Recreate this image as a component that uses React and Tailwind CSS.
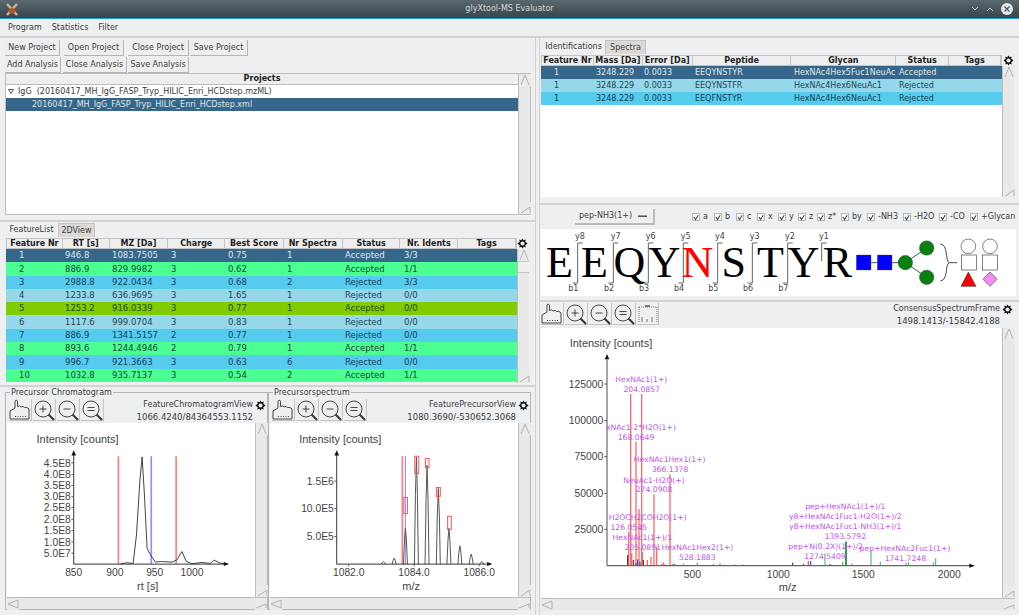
import React from 'react';

const features = [
  ['1', '946.8', '1083.7505', '3', '0.75', '1', 'Accepted', '3/3', '', 'sel'],
  ['2', '886.9', '829.9982', '3', '0.62', '1', 'Accepted', '1/1', '', 'green'],
  ['3', '2988.8', '922.0434', '3', '0.68', '2', 'Rejected', '3/3', '', 'blue'],
  ['4', '1233.8', '636.9695', '3', '1.65', '1', 'Rejected', '0/0', '', 'light'],
  ['5', '1253.2', '916.0339', '3', '0.77', '1', 'Accepted', '0/0', '', 'olive'],
  ['6', '1117.6', '999.0704', '3', '0.83', '1', 'Rejected', '0/0', '', 'light'],
  ['7', '886.9', '1341.5157', '2', '0.77', '1', 'Rejected', '0/0', '', 'blue'],
  ['8', '893.6', '1244.4946', '2', '0.79', '1', 'Accepted', '1/1', '', 'green'],
  ['9', '996.7', '921.3663', '3', '0.63', '6', 'Rejected', '0/0', '', 'blue'],
  ['10', '1032.8', '935.7137', '3', '0.54', '2', 'Accepted', '1/1', '', 'green'],
];
const featureCols = [
  ['Feature Nr', 'w-[56px]', 'w-[56px] pl-[13px]'],
  ['RT [s]', 'w-[47px]', 'w-[47px] pl-[3px]'],
  ['MZ [Da]', 'w-[59px]', 'w-[59px] pl-[3px]'],
  ['Charge', 'w-[57px]', 'w-[57px] pl-[3px]'],
  ['Best Score', 'w-[59px]', 'w-[59px] pl-[3px]'],
  ['Nr Spectra', 'w-[59px]', 'w-[59px] pl-[3px]'],
  ['Status', 'w-[58px]', 'w-[58px] pl-[2px]'],
  ['Nr. Idents', 'w-[58px]', 'w-[58px] pl-[3px]'],
  ['Tags', 'w-[58px]', 'w-[58px]'],
];
const idents = [
  ['1', '3248.229', '0.0033', 'EEQYNSTYR', 'HexNAc4Hex5Fuc1NeuAc', 'Accepted', '', 'sel'],
  ['1', '3248.229', '0.0033', 'EEQYNSTFR', 'HexNAc4Hex6NeuAc1', 'Rejected', '', 'light'],
  ['1', '3248.229', '0.0033', 'EEQFNSTYR', 'HexNAc4Hex6NeuAc1', 'Rejected', '', 'blue'],
];
const identCols = [
  ['Feature Nr', 'w-[52px]', 'w-[52px] pl-[13px]'],
  ['Mass [Da]', 'w-[49px]', 'w-[49px] pl-[3px]'],
  ['Error [Da]', 'w-[50px]', 'w-[50px] pl-[2px]'],
  ['Peptide', 'w-[99px]', 'w-[99px] pl-[3px]'],
  ['Glycan', 'w-[105px]', 'w-[105px] pl-[3px]'],
  ['Status', 'w-[53px]', 'w-[53px] pl-[3px]'],
  ['Tags', 'w-[52px]', 'w-[52px]'],
];
const rowColors = {
  sel: 'bg-[#36678a] text-[#dfe8ee]',
  green: 'bg-[#4bff90] text-[#17453f]',
  blue: 'bg-[#55cbee] text-[#173f55]',
  light: 'bg-[#96d7e9] text-[#234654]',
  olive: 'bg-[#80cc00] text-[#1f4a10]',
};
const checks = [
  ['a', 'w-[22px]'], ['b', 'w-[22px]'], ['c', 'w-[21px]'], ['x', 'w-[21px]'], ['y', 'w-[20px]'], ['z', 'w-[19px]'],
  ['z*', 'w-[24px]'], ['by', 'w-[26px]'], ['-NH3', 'w-[36px]'], ['-H2O', 'w-[36px]'], ['-CO', 'w-[31px]'], ['+Glycan', 'w-[44px]'],
];

function Gear() {
  return (
    <svg width="11" height="11" viewBox="0 0 24 24" className="shrink-0">
      <path d="M12 1l2.5 4 4.5-1.500L18 8l5 4-5 4 1 4.500-4.500-1.500L12 23l-2.500-4-4.500 1.500L6 16l-5-4 5-4-1-4.500L9.500 5z" fill="#111" />
      <circle cx="12" cy="12" r="4.500" fill="#eee" />
    </svg>
  );
}

function Btn({ children, className }) {
  return (
    <div className={`flex h-[16px] items-center justify-center border-r border-b border-[#b5b5b5] bg-[#eeeeee] ${className}`}>
      {children}
    </div>
  );
}

function Arrow({ dir }) {
  const p = dir === 'up' ? 'M2 11L6 1L10 11' : dir === 'down' ? 'M2 11L11 5V11' : dir === 'left' ? 'M11 2L1 6L11 10Z' : 'M1 10L11 6V10';
  return (
    <div className="flex h-[12px] w-[12px] shrink-0 items-center justify-center bg-[#eaeaea]">
      <svg width="12" height="12" viewBox="0 0 12 12"><path d={p} fill="none" stroke="#b4b4b4" /></svg>
    </div>
  );
}

function VScroll({ thumb, className }) {
  return (
    <div className={`flex w-[12px] shrink-0 flex-col border-l border-[#bdbdbd] bg-[#e8e8e8] ${className || ''}`}>
      <Arrow dir="up" />
      {thumb && <div className="h-[12px] border-y border-[#c5c5c5] bg-[#efefef]" />}
      <div className="flex-1" />
      <Arrow dir="down" />
    </div>
  );
}

function HScroll() {
  return (
    <div className="flex h-[12px] shrink-0 border-t border-[#bdbdbd] bg-[#e8e8e8]">
      <Arrow dir="left" />
      <div className="flex-1" />
      <Arrow dir="right" />
    </div>
  );
}

function Hand() {
  return (
    <svg width="22" height="22" viewBox="0 0 22 22" fill="none" stroke="#333" strokeWidth="0.9">
      <path d="M1 20V12L6 9V2.500a1.200 1.200 0 0 1 2.500 0V7.500q2.500-1.500 3.500 .5q2.500-1.500 3.500 .5q2.500-1 4.500 1.500V20Z" />
      <path d="M6 17.500H18" strokeDasharray="1 1.500" />
    </svg>
  );
}

function Lens({ sign }) {
  return (
    <svg width="22" height="22" viewBox="0 0 22 22" fill="none" stroke="#333">
      <circle cx="10" cy="10" r="8" strokeWidth="0.9" />
      <path d="M15.500 15.500L21 21" strokeWidth="2" />
      {sign === '+' && <path d="M6.500 10H13.500M10 6.500V13.500" strokeWidth="0.9" />}
      {sign === '-' && <path d="M6.500 10H13.500" strokeWidth="0.9" />}
      {sign === '=' && <path d="M6.500 8.500H13.500M6.500 11.500H13.500" strokeWidth="0.9" />}
    </svg>
  );
}

function Tools({ children }) {
  return (
    <div className="flex gap-[1px]">
      <div className="flex h-[22px] w-[23px] items-center justify-center border-r border-b border-[#c4c4c4]"><Hand /></div>
      <div className="flex h-[22px] w-[23px] items-center justify-center border-r border-b border-[#c4c4c4]"><Lens sign="+" /></div>
      <div className="flex h-[22px] w-[23px] items-center justify-center border-r border-b border-[#c4c4c4]"><Lens sign="-" /></div>
      <div className="flex h-[22px] w-[23px] items-center justify-center border-r border-b border-[#c4c4c4]"><Lens sign="=" /></div>
      {children}
    </div>
  );
}

function ViewInfo({ name, coords }) {
  return (
    <div className="flex flex-col items-end leading-[12px]">
      <div className="flex items-center gap-[2px]">{name}<Gear /></div>
      <div className="pr-[13px] text-[8.5px]">{coords}</div>
    </div>
  );
}

const axisText = "fill-[#444] font-['Liberation_Sans',sans-serif] text-[33px]";
const tickText = "fill-[#444] font-['Liberation_Sans',sans-serif] text-[31px]";

function YTick({ x, y, label }) {
  return (
    <g>
      <line x1={x - 7} x2={x} y1={y} y2={y} stroke="#555" strokeWidth="3" />
      <text x={x - 9} y={y + 11} textAnchor="end" className={tickText}>{label}</text>
    </g>
  );
}

function Axes({ x0, y0, top, right, strokeW, yColor }) {
  return (
    <g>
      <line x1={x0} x2={x0} y1={y0} y2={top + 10} stroke={yColor} strokeWidth={strokeW} />
      <line x1={x0} x2={right - 10} y1={y0} y2={y0} stroke={yColor} strokeWidth={strokeW} />
      <path d={`M${x0 - 7} ${top + 14}L${x0} ${top - 2}L${x0 + 7} ${top + 14}Z`} fill="#111" />
      <path d={`M${right - 14} ${y0 - 6}L${right + 2} ${y0}L${right - 14} ${y0 + 6}Z`} fill="#111" />
    </g>
  );
}

function ChromatogramPlot() {
  const ticks = [['4.5E8', 233], ['4.0E8', 268], ['3.5E8', 301], ['3.0E8', 335], ['2.5E8', 368], ['2.0E8', 403], ['1.5E8', 437], ['1.0E8', 471], ['5.0E7', 505]];
  return (
    <svg viewBox="18 114 747 522" className="h-[174px] w-[249px] bg-white">
      <text x="107" y="174" className={axisText}>Intensity [counts]</text>
      <rect x="351" y="213" width="5" height="325" fill="#ff7f7f" />
      <rect x="525" y="213" width="5" height="325" fill="#ff7f7f" />
      <rect x="450" y="213" width="5" height="325" fill="#8f8fff" />
      <polyline fill="none" stroke="#444" strokeWidth="3" points="360,537 380,534 398,536 408,450 418,290 425,215 432,330 440,490 450,510 465,532 480,530 515,532 530,525 545,500 558,530 575,537 605,533 630,536 642,526 660,535 680,537" />
      <Axes x0={219} y0={538} top={197} right={685} strokeW={3} yColor="#333" />
      {ticks.map(([l, y]) => <YTick key={l} x={219} y={y} label={l} />)}
      {[['850', 219], ['900', 343], ['950', 463], ['1000', 575]].map(([l, x]) => (
        <text key={l} x={x} y={574} textAnchor="middle" className={tickText}>{l}</text>
      ))}
      <text x="442" y="615" textAnchor="middle" className={axisText}>rt [s]</text>
    </svg>
  );
}

function PrecursorPlot() {
  const peaks = [[352, 530], [384, 520], [418, 430], [451, 215], [483, 240], [517, 310], [549, 430], [582, 483], [616, 508], [648, 530]];
  const boxes = [[413, 337, 11, 49], [446, 213, 12, 52], [478, 220, 11, 28], [511, 307, 12, 27], [545, 394, 11, 40]];
  return (
    <svg viewBox="10 114 747 522" className="h-[174px] w-[249px] bg-white">
      <text x="98" y="174" className={axisText}>Intensity [counts]</text>
      <rect x="406" y="213" width="5" height="325" fill="#ff7f7f" />
      <rect x="416" y="213" width="3" height="325" fill="#7f7fff" />
      {peaks.map(([x, t]) => (
        <polyline key={x} fill="none" stroke="#555" strokeWidth="3" points={`${x - 6},538 ${x - 3},${t + (538 - t) * 0.35} ${x},${t} ${x + 3},${t + (538 - t) * 0.35} ${x + 6},538`} />
      ))}
      {boxes.map(([x, y, w, h]) => (
        <rect key={x} x={x} y={y} width={w} height={h} fill="none" stroke="#ff5555" strokeWidth="3" />
      ))}
      <Axes x0={211} y0={538} top={197} right={678} strokeW={3} yColor="#333" />
      {[['1.5E6', 288], ['10.0E5', 371], ['5.0E5', 455]].map(([l, y]) => <YTick key={l} x={211} y={y} label={l} />)}
      {[['1082.0', 247], ['1084.0', 444], ['1086.0', 640]].map(([l, x]) => (
        <g key={l}>
          <line x1={x} x2={x} y1={538} y2={544} stroke="#555" strokeWidth="3" />
          <text x={x} y={574} textAnchor="middle" className={tickText}>{l}</text>
        </g>
      ))}
      <text x="435" y="615" textAnchor="middle" className={axisText}>m/z</text>
    </svg>
  );
}

const annText = "fill-[#bf55f2] font-['DejaVu_Sans',sans-serif] text-[23px]";

function ConsensusPlot() {
  const red = [[287, 192], [303, 335], [320, 192], [357, 493], [405, 433], [281, 605], [312, 537], [365, 650], [348, 680], [337, 690], [290, 670], [322, 665], [385, 697], [555, 700], [487, 698]];
  const green = [[870, 670], [932, 635], [1008, 660], [1036, 695], [923, 695], [1113, 698], [1120, 696], [1195, 697], [1202, 685]];
  const dark = [[278, 675], [295, 690], [303, 700], [315, 695], [325, 690], [773, 698], [805, 702], [885, 702], [950, 703], [380, 703], [420, 703], [445, 703], [535, 703]];
  const blue = [[308, 688], [827, 693], [415, 702], [390, 703], [600, 704], [625, 704]];
  const labels = [
    ['HexNAc1(1+)', 319, 156], ['204.0857', 320, 185], ['xNAc1-2*H2O(1+)', 318, 300], ['168.0649', 303, 329],
    ['HexNAc1Hex1(1+)', 404, 396], ['366.1378', 405, 425], ['NeuAc1-H2O(+)', 357, 458], ['274.0908', 357, 487],
    ['H2OCH2COH2O(1+)', 338, 570], ['126.0545', 281, 599], ['HexNAc1(1+)/1', 322, 631], ['205.0891', 323, 661],
    ['HexNAc1Hex2(1+)', 487, 661], ['528.1883', 487, 690], ['pep+HexNAc1(1+)/1', 931, 538],
    ['y8+HexNAc1Fuc1-H2O(1+)/2', 931, 567], ['y8+HexNAc1Fuc1-NH3(1+)/1', 931, 597], ['1393.5792', 931, 626],
    ['pep+N(0.2X)(1+)/2', 872, 657], ['1274.5409', 870, 686], ['pep+HexNAc2Fuc1(1+)', 1110, 662], ['1741.7248', 1111, 692],
  ];
  return (
    <svg viewBox="18 -6 1383 810" className="h-[270px] w-[461px] bg-white">
      <text x="104" y="52" className={axisText}>Intensity [counts]</text>
      {red.map(([x, t]) => <rect key={x} x={x - 2} y={t} width="4" height={707 - t} fill="#ff6a6a" />)}
      {green.map(([x, t]) => <rect key={x} x={x - 1.5} y={t} width={x === 932 ? 5 : 3} height={707 - t} fill={x === 932 ? '#0a8a2a' : '#3fb05a'} />)}
      {dark.map(([x, t]) => <rect key={x} x={x - 1.5} y={t} width="3" height={707 - t} fill="#222" />)}
      {blue.map(([x, t]) => <rect key={x} x={x - 1.5} y={t} width="3" height={707 - t} fill="#2222ee" />)}
      <rect x="818" y="693" width="4" height="14" fill="#ff5555" />
      <line x1="216" x2="216" y1="707" y2="88" stroke="#777" strokeWidth="4" />
      <line x1="216" x2="1308" y1="707" y2="707" stroke="#666" strokeWidth="4" />
      <path d="M209 88L216 72L223 88Z" fill="#111" />
      <path d="M1303 701L1320 707L1303 713Z" fill="#111" />
      {[['125000', 162], ['100000', 272], ['75000', 380], ['50000', 490], ['25000', 598]].map(([l, y]) => (
        <g key={l}>
          <line x1={208} x2={216} y1={y} y2={y} stroke="#555" strokeWidth="3" />
          <text x={205} y={y + 11} textAnchor="end" className={tickText}>{l}</text>
        </g>
      ))}
      {[['500', 472], ['1000', 730], ['1500', 985], ['2000', 1243]].map(([l, x]) => (
        <text key={l} x={x} y={745} textAnchor="middle" className={tickText}>{l}</text>
      ))}
      <text x="758" y="782" textAnchor="middle" className={axisText}>m/z</text>
      {labels.map(([t, x, y]) => <text key={t} x={x} y={y} textAnchor="middle" className={annText}>{t}</text>)}
    </svg>
  );
}

function PeptideView() {
  const letters = [['E', 73], ['E', 178], ['Q', 283], ['Y', 388], ['N', 487], ['S', 596], ['T', 706], ['Y', 805], ['R', 907]];
  const cuts = [128, 235, 340, 445, 548, 652, 758, 860];
  const ionText = "fill-[#444] font-['DejaVu_Sans',sans-serif] text-[24px]";
  return (
    <svg viewBox="18 103 1425 201" className="h-[67px] w-[475px] bg-white">
      {letters.map(([l, x], i) => (
        <text key={i} x={x} y="248" textAnchor="middle" fill={l === 'N' ? '#ff0000' : '#000'} className="font-['Liberation_Serif',serif] text-[132px]">{l}</text>
      ))}
      {cuts.map((x, i) => (
        <g key={x}>
          <path d={i === 7 ? `M${x} 200V145H${x + 15}` : `M${x + 15} 145H${x}V265H${x - 15}`} fill="none" stroke="#666" strokeWidth="3" />
          <text x={x + 7} y="134" textAnchor="middle" className={ionText}>{`y${8 - i}`}</text>
          {i < 7 && <text x={x - 13} y="290" textAnchor="middle" className={ionText}>{`b${i + 1}`}</text>}
        </g>
      ))}
      <path d="M1008 204H1027M1071 204H1090M1111 204L1175 160M1111 204L1175 248" stroke="#555" strokeWidth="3" />
      <rect x="964" y="181" width="44" height="45" fill="#0000ff" stroke="#555" />
      <rect x="1027" y="181" width="44" height="45" fill="#0000ff" stroke="#555" />
      <circle cx="1111" cy="204" r="22" fill="#0a7f12" stroke="#555" />
      <circle cx="1175" cy="160" r="22" fill="#0a7f12" stroke="#555" />
      <circle cx="1175" cy="248" r="22" fill="#0a7f12" stroke="#555" />
      <path d="M1216 148C1240 150 1230 195 1242 204H1266M1242 204C1230 212 1240 256 1216 259" fill="none" stroke="#444" strokeWidth="3" />
      <circle cx="1300" cy="155" r="22" fill="#fff" stroke="#444" strokeWidth="2" />
      <circle cx="1365" cy="155" r="22" fill="#fff" stroke="#444" strokeWidth="2" />
      <rect x="1279" y="181" width="45" height="45" fill="#fff" stroke="#444" strokeWidth="2" />
      <rect x="1342" y="181" width="45" height="45" fill="#fff" stroke="#444" strokeWidth="2" />
      <path d="M1300 232L1323 275H1278Z" fill="#ff0000" stroke="#444" strokeWidth="2" />
      <path d="M1365 232L1386 254L1365 275L1344 254Z" fill="#f58cf5" stroke="#444" strokeWidth="2" />
    </svg>
  );
}

function HeaderCell({ children, className }) {
  return (
    <div className={`flex h-full items-center justify-center whitespace-nowrap border-r border-[#c4c4c4] font-bold text-[#222] ${className}`}>{children}</div>
  );
}

function Check({ label, className }) {
  return (
    <div className={`flex shrink-0 items-center gap-[3px] whitespace-nowrap ${className}`}>
      <div className="flex h-[8px] w-[8px] items-center justify-center border border-[#b5b5b5] bg-white">
        <svg width="7" height="7" viewBox="0 0 7 7"><path d="M1 3L3 6L6 1" fill="none" stroke="#333" strokeWidth="1.2" /></svg>
      </div>
      {label}
    </div>
  );
}

function PlotPanel({ title, name, coords, children }) {
  return (
    <fieldset className="flex h-[222px] w-[263px] min-w-0 flex-col border border-[#b5b5b5] pl-[1px]">
      <legend className="ml-[3px] px-[1px] leading-[9px]">{title}</legend>
      <div className="flex h-[26px] items-start justify-between pt-[2px] pl-[2px] pr-[1px]">
        <Tools />
        <ViewInfo name={name} coords={coords} />
      </div>
      <div className="flex">
        {children}
        <VScroll />
      </div>
      <HScroll />
    </fieldset>
  );
}

export default function App() {
  return (
    <div className="flex h-[615px] w-[1019px] flex-col overflow-hidden bg-[#eeeff0] font-['DejaVu_Sans',sans-serif] text-[8px] text-[#3c3c3c]">
      {/* window title */}
      <div className="flex h-[19px] shrink-0 items-center justify-between border-b border-[#1a9fd8] bg-gradient-to-b from-[#5a686f] to-[#38444b] pl-[6px] pr-[6px]">
        <svg width="12" height="13" viewBox="0 0 12 13">
          <path d="M1 1L11 12M11 1L1 12" stroke="#c9b48f" strokeWidth="2.5" />
          <circle cx="6" cy="8" r="3" fill="#b8502a" />
        </svg>
        <div className="ml-[30px] text-[#d3d8da]">glyXtool-MS Evaluator</div>
        <div className="flex items-center gap-[7px]">
          <svg width="8" height="6" viewBox="0 0 8 6"><path d="M1 1L4 4L7 1" fill="none" stroke="#c7cdd0" /></svg>
          <svg width="8" height="6" viewBox="0 0 8 6"><path d="M1 5L4 2L7 5" fill="none" stroke="#c7cdd0" /></svg>
          <svg width="12" height="12" viewBox="0 0 12 12"><circle cx="6" cy="6" r="6" fill="#e4e6e7" /><path d="M3.5 3.5L8.5 8.5M8.5 3.5L3.5 8.5" stroke="#4a565c" strokeWidth="1.2" /></svg>
        </div>
      </div>
      {/* menu */}
      <div className="flex h-[19px] shrink-0 items-center gap-[10px] border-b-2 border-[#d2d2d2] pl-[8px]">
        <span>Program</span><span>Statistics</span><span>Filter</span>
      </div>
      <div className="flex min-h-0 flex-1">
        {/* left column */}
        <div className="flex w-[535px] shrink-0 flex-col pt-[2px]">
          <div className="flex pl-[5px]">
            <Btn className="w-[55px]">New Project</Btn>
            <Btn className="ml-[4px] w-[60px]">Open Project</Btn>
            <Btn className="ml-[4px] w-[61px]">Close Project</Btn>
            <Btn className="ml-[1px] w-[58px]">Save Project</Btn>
          </div>
          <div className="mt-[1px] flex pl-[5px]">
            <Btn className="w-[56px]">Add Analysis</Btn>
            <Btn className="ml-[2px] w-[64px]">Close Analysis</Btn>
            <Btn className="ml-[1px] w-[61px]">Save Analysis</Btn>
          </div>
          <div className="ml-[5px] flex h-[142px] w-[526px] border border-[#bdbdbd]">
            <div className="flex min-w-0 flex-1 flex-col bg-white">
              <div className="flex h-[11px] items-center justify-center border-b border-[#bdbdbd] bg-[#eeeeee] font-bold text-[#222]">Projects</div>
              <div className="flex h-[13px] items-center pl-[2px]">
                <svg width="6" height="5" viewBox="0 0 6 5" className="mr-[4px]"><path d="M.5 .5H5.5L3 4.5Z" fill="none" stroke="#555" /></svg>
                IgG&nbsp;&nbsp;(20160417_MH_IgG_FASP_Tryp_HILIC_Enri_HCDstep.mzML)
              </div>
              <div className="flex h-[13px] items-center bg-[#36678a] pl-[26px] text-[#dfe8ee]">20160417_MH_IgG_FASP_Tryp_HILIC_Enri_HCDstep.xml</div>
            </div>
            <VScroll />
          </div>
          <div className="mt-[5px] h-[2px] w-full shrink-0 bg-[#d2d2d2]" />
          <div className="ml-[5px] mt-[1px] flex h-[14px] items-end">
            <div className="flex h-[14px] w-[53px] items-center justify-center">FeatureList</div>
            <div className="flex h-[14px] w-[37px] items-center justify-center border-x border-t border-[#c4c4c4] bg-[#dcd9d5]">2DView</div>
          </div>
          <div className="ml-[6px] mt-[1px] flex h-[145px] w-[519px]">
            <div className="flex w-[511px] flex-col">
              <div className="flex h-[11px] border border-[#c4c4c4] bg-[#eeeeee]">
                {featureCols.map(([h, w]) => (
                  <HeaderCell key={h} className={w}>{h}</HeaderCell>
                ))}
              </div>
              {features.map((r) => (
                <div key={r[0]} className={`flex h-[13.3px] items-center text-[8.5px] ${rowColors[r[9]]}`}>
                  {featureCols.map(([h, , c], i) => (
                    <div key={h} className={c}>{r[i]}</div>
                  ))}
                </div>
              ))}
            </div>
            <div className="flex w-[8px] flex-col items-end overflow-visible">
              <div className="h-[11px] w-[11px] shrink-0 translate-x-[3px]"><Gear /></div>
              <VScroll thumb className="flex-1 translate-x-[4px]" />
            </div>
          </div>
          <div className="mt-[2px] h-[2px] w-full shrink-0 bg-[#d2d2d2]" />
          <div className="ml-[5px] mt-[1px] flex">
            <PlotPanel title="Precursor Chromatogram" name="FeatureChromatogramView" coords="1066.4240/84364553.1152">
              <ChromatogramPlot />
            </PlotPanel>
            <PlotPanel title="Precursorspectrum" name="FeaturePrecursorView" coords="1080.3690/-530652.3068">
              <PrecursorPlot />
            </PlotPanel>
          </div>
        </div>
        {/* sash */}
        <div className="w-[5px] shrink-0 border-x border-[#d2d2d2]" />
        {/* right column */}
        <div className="flex min-w-0 flex-1 flex-col pt-[2px]">
          <div className="ml-[2px] flex h-[14px] items-end">
            <div className="flex h-[14px] w-[63px] items-center justify-center">Identifications</div>
            <div className="flex h-[14px] w-[41px] items-center justify-center border-x border-t border-[#c4c4c4] bg-[#dcd9d5]">Spectra</div>
          </div>
          <div className="ml-[1px] mt-[1px] flex h-[142px]">
            <div className="flex w-[461px] flex-col bg-white">
              <div className="flex h-[11px] shrink-0 border border-[#c4c4c4] bg-[#eeeeee]">
                {identCols.map(([h, w]) => (
                  <HeaderCell key={h} className={w}>{h}</HeaderCell>
                ))}
              </div>
              {idents.map((r, n) => (
                <div key={n} className={`flex h-[13px] items-center overflow-hidden whitespace-nowrap ${rowColors[r[7]]}`}>
                  {identCols.map(([h, , c], i) => (
                    <div key={h} className={`overflow-hidden ${c}`}>{r[i]}</div>
                  ))}
                </div>
              ))}
            </div>
            <div className="flex w-[13px] flex-col">
              <div className="h-[11px] shrink-0 pl-[1px]"><Gear /></div>
              <VScroll className="flex-1" />
            </div>
          </div>
          <div className="mt-[6px] h-[2px] w-full shrink-0 bg-[#d2d2d2]" />
          <div className="flex h-[24px] shrink-0 items-center">
            <div className="ml-[35px] flex h-[16px] w-[80px] shrink-0 items-center justify-between whitespace-nowrap border-r-2 border-b-2 border-[#bcbcbc] pl-[4px] pr-[6px]">
              pep-NH3(1+)
              <div className="h-[2px] w-[9px] border-b border-[#555] bg-[#999]" />
            </div>
            <div className="ml-[37px] flex items-center">
              {checks.map(([l, w]) => <Check key={l} label={l} className={w} />)}
            </div>
          </div>
          <div className="ml-[1px]"><PeptideView /></div>
          <div className="mt-[4px] h-[2px] w-full shrink-0 bg-[#d2d2d2]" />
          <div className="ml-[1px] flex h-[26px] shrink-0 items-start justify-between pt-[1px] pr-[6px]">
            <Tools>
              <div className="flex h-[22px] w-[22px] items-center justify-center border-r border-b border-[#c4c4c4]">
                <svg width="20" height="20" viewBox="0 0 20 20" fill="none" stroke="#555" strokeWidth="0.8">
                  <path d="M1 3H19M1 3V18M19 3V18" strokeDasharray="1 1" />
                  <path d="M7 2H12" strokeWidth="1.5" />
                  <path d="M4 18V13M9 18V15M14 18V13" />
                </svg>
              </div>
            </Tools>
            <ViewInfo name="ConsensusSpectrumFrame" coords="1498.1413/-15842.4188" />
          </div>
          <div className="ml-[1px] flex">
            <ConsensusPlot />
            <VScroll className="w-[13px]" />
          </div>
          <div className="ml-[1px] w-[474px]"><HScroll /></div>
        </div>
      </div>
    </div>
  );
}
